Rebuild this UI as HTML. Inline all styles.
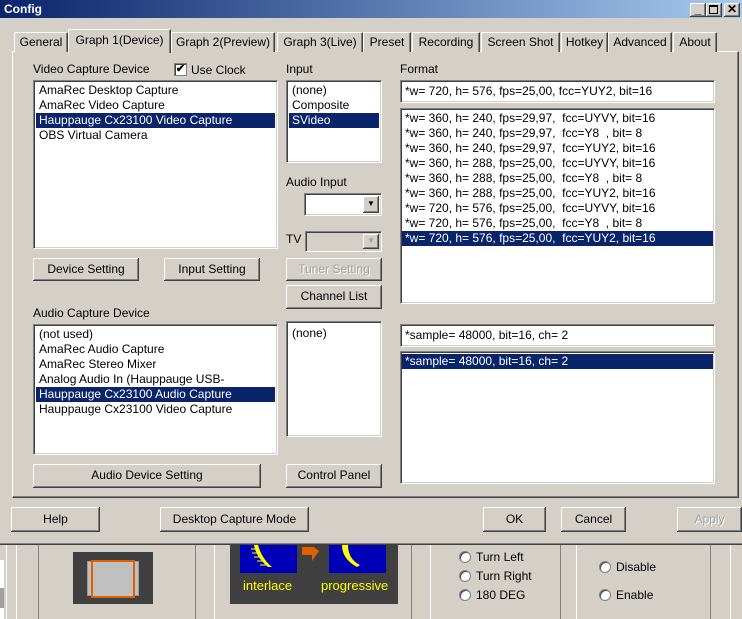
<!DOCTYPE html>
<html><head><meta charset="utf-8"><style>
*{margin:0;padding:0;box-sizing:border-box}
body{width:742px;height:619px;overflow:hidden;background:#d4d0c8;font-family:"Liberation Sans",sans-serif;font-size:12px;color:#000;position:relative}
.a{position:absolute}
.btn{position:absolute;background:#d4d0c8;box-shadow:inset -1px -1px #404040,inset 1px 1px #fff,inset -2px -2px #808080;text-align:center;line-height:23px}
.dis{color:#a0a0a0;text-shadow:1px 1px #fff}
.sunk{position:absolute;background:#fff;border:1px solid;border-color:#808080 #fff #fff #808080;box-shadow:inset 1px 1px #404040,inset -1px -1px #d4d0c8}
.it{height:15px;line-height:15px;padding-left:3px;white-space:pre}
.sel{background:#0a246a;color:#fff}
.tab{position:absolute;top:32px;height:20px;background:#d4d0c8;border-top:1px solid #fff;border-left:1px solid #fff;border-right:1px solid #404040;box-shadow:inset -1px 0 #808080;text-align:center;line-height:18px;font-size:12px}
.radio{position:absolute;width:12px;height:12px;border-radius:50%;background:#fff;border:1px solid #808080;box-shadow:inset 1px 1px #404040}
</style></head><body>
<div class="a" style="left:0;top:0;width:742px;height:18px;background:linear-gradient(90deg,#0a246a,#a6caf0)"></div>
<div class="a" style="left:4px;top:2px;color:#fff;font-weight:bold;font-size:12px">Config</div>
<div class="btn" style="left:690px;top:3px;width:16px;height:14px;line-height:12px;font-weight:bold">_</div>
<div class="btn" style="left:706px;top:3px;width:16px;height:14px"><div class="a" style="left:3px;top:2px;width:9px;height:9px;border:1px solid #000;border-top-width:2px"></div></div>
<div class="btn" style="left:724px;top:3px;width:16px;height:14px;line-height:13px;font-weight:bold">✕</div>

<div class="a" style="left:12px;top:51px;width:727px;height:447px;border-top:1px solid #fff;border-left:1px solid #fff;border-right:1px solid #404040;border-bottom:1px solid #404040;box-shadow:inset -1px -1px #808080"></div>
<div class="tab" style="left:14px;width:54px">General</div>
<div class="tab" style="left:171px;width:104px">Graph 2(Preview)</div>
<div class="tab" style="left:277px;width:86px">Graph 3(Live)</div>
<div class="tab" style="left:363px;width:48px">Preset</div>
<div class="tab" style="left:412px;width:68px">Recording</div>
<div class="tab" style="left:481px;width:79px">Screen Shot</div>
<div class="tab" style="left:561px;width:47px">Hotkey</div>
<div class="tab" style="left:608px;width:64px">Advanced</div>
<div class="tab" style="left:673px;width:44px">About</div>
<div class="tab" style="left:68px;top:29px;height:24px;width:103px;border-bottom:none;line-height:20px">Graph 1(Device)</div>

<div class="a" style="left:33px;top:62px">Video Capture Device</div>
<div class="a" style="left:174px;top:63px;width:13px;height:13px;background:#fff;border:1px solid #808080;box-shadow:inset 1px 1px #404040;font-size:11px;line-height:11px;text-align:center;font-weight:bold">✔</div>
<div class="a" style="left:191px;top:63px">Use Clock</div>
<div class="sunk" style="left:33px;top:80px;width:245px;height:169px;padding:2px"><div class="it">AmaRec Desktop Capture</div><div class="it">AmaRec Video Capture</div><div class="it sel">Hauppauge Cx23100 Video Capture</div><div class="it">OBS Virtual Camera</div></div>

<div class="a" style="left:286px;top:62px">Input</div>
<div class="sunk" style="left:286px;top:80px;width:96px;height:83px;padding:2px"><div class="it">(none)</div><div class="it">Composite</div><div class="it sel">SVideo</div></div>

<div class="a" style="left:286px;top:175px">Audio Input</div>
<div class="sunk" style="left:304px;top:193px;width:78px;height:23px"><div class="btn" style="right:2px;top:2px;width:16px;height:17px;line-height:15px;font-size:8px">▼</div></div>
<div class="a" style="left:286px;top:232px">TV</div>
<div class="sunk" style="left:305px;top:231px;width:77px;height:21px;background:#d4d0c8"><div class="btn" style="right:2px;top:2px;width:16px;height:15px;line-height:14px;font-size:8px;color:#a0a0a0">▼</div></div>
<div class="btn dis" style="left:286px;top:258px;width:96px;height:23px">Tuner Setting</div>
<div class="btn" style="left:286px;top:285px;width:96px;height:24px">Channel List</div>

<div class="btn" style="left:33px;top:258px;width:106px;height:23px">Device Setting</div>
<div class="btn" style="left:164px;top:258px;width:96px;height:23px">Input Setting</div>

<div class="a" style="left:33px;top:306px">Audio Capture Device</div>
<div class="sunk" style="left:33px;top:324px;width:245px;height:131px;padding:2px"><div class="it">(not used)</div><div class="it">AmaRec Audio Capture</div><div class="it">AmaRec Stereo Mixer</div><div class="it">Analog Audio In (Hauppauge USB-</div><div class="it sel">Hauppauge Cx23100 Audio Capture</div><div class="it">Hauppauge Cx23100 Video Capture</div></div>
<div class="sunk" style="left:286px;top:321px;width:96px;height:116px;padding:4px 2px"><div class="it">(none)</div></div>
<div class="btn" style="left:33px;top:464px;width:228px;height:24px">Audio Device Setting</div>
<div class="btn" style="left:286px;top:464px;width:96px;height:24px">Control Panel</div>

<div class="a" style="left:400px;top:62px">Format</div>
<div class="sunk" style="left:400px;top:80px;width:315px;height:23px;padding:3px 4px">*w= 720, h= 576, fps=25,00,  fcc=YUY2, bit=16</div>
<div class="sunk" style="left:400px;top:108px;width:315px;height:196px;padding:2px 1px">
<div class="it">*w= 360, h= 240, fps=29,97,  fcc=UYVY, bit=16</div>
<div class="it">*w= 360, h= 240, fps=29,97,  fcc=Y8  , bit= 8</div>
<div class="it">*w= 360, h= 240, fps=29,97,  fcc=YUY2, bit=16</div>
<div class="it">*w= 360, h= 288, fps=25,00,  fcc=UYVY, bit=16</div>
<div class="it">*w= 360, h= 288, fps=25,00,  fcc=Y8  , bit= 8</div>
<div class="it">*w= 360, h= 288, fps=25,00,  fcc=YUY2, bit=16</div>
<div class="it">*w= 720, h= 576, fps=25,00,  fcc=UYVY, bit=16</div>
<div class="it">*w= 720, h= 576, fps=25,00,  fcc=Y8  , bit= 8</div>
<div class="it sel">*w= 720, h= 576, fps=25,00,  fcc=YUY2, bit=16</div>
</div>
<div class="sunk" style="left:400px;top:324px;width:315px;height:23px;padding:3px 4px">*sample= 48000, bit=16, ch= 2</div>
<div class="sunk" style="left:400px;top:351px;width:315px;height:133px;padding:2px 1px"><div class="it sel">*sample= 48000, bit=16, ch= 2</div></div>

<div class="btn" style="left:11px;top:507px;width:89px;height:25px;line-height:24px">Help</div>
<div class="btn" style="left:160px;top:507px;width:149px;height:25px;line-height:24px">Desktop Capture Mode</div>
<div class="btn" style="left:483px;top:507px;width:63px;height:25px;line-height:24px">OK</div>
<div class="btn" style="left:561px;top:507px;width:65px;height:25px;line-height:24px">Cancel</div>
<div class="btn dis" style="left:677px;top:507px;width:65px;height:25px;line-height:24px">Apply</div>

<div class="a" style="left:0;top:543px;width:742px;height:1px;background:#808080"></div>
<div class="a" style="left:0;top:544px;width:742px;height:1px;background:#404040"></div>
<div class="a" style="left:0;top:560px;width:4px;height:59px;background:#fff"></div>
<div class="a" style="left:0;top:588px;width:4px;height:20px;background:#a0a0a0"></div>
<div class="a" style="left:6px;top:545px;width:1px;height:74px;background:#fff"></div>
<div class="a" style="left:16px;top:545px;width:1px;height:74px;background:#fff"></div>
<div class="a" style="left:38px;top:545px;width:1px;height:74px;background:#808080"></div>
<div class="a" style="left:195px;top:545px;width:1px;height:74px;background:#808080"></div>
<div class="a" style="left:214px;top:545px;width:1px;height:74px;background:#fff"></div>
<div class="a" style="left:411px;top:545px;width:1px;height:74px;background:#808080"></div>
<div class="a" style="left:430px;top:545px;width:1px;height:74px;background:#fff"></div>
<div class="a" style="left:560px;top:545px;width:1px;height:74px;background:#808080"></div>
<div class="a" style="left:576px;top:545px;width:1px;height:74px;background:#fff"></div>
<div class="a" style="left:710px;top:545px;width:1px;height:74px;background:#808080"></div>
<div class="a" style="left:730px;top:545px;width:1px;height:74px;background:#fff"></div>
<div class="a" style="left:73px;top:552px;width:80px;height:52px;background:#404040"></div>
<div class="a" style="left:87px;top:561px;width:52px;height:35px;background:#c0c0c0;border:1px solid #999"></div>
<div class="a" style="left:91px;top:560px;width:44px;height:38px;background:#c0c0c0;border:2px solid #e06000"></div>
<div class="a" style="left:230px;top:545px;width:168px;height:59px;background:#404040"></div>
<div class="a" style="left:240px;top:545px;width:57px;height:28px;background:#0000b8"></div>
<div class="a" style="left:329px;top:545px;width:57px;height:28px;background:#0000b8"></div>
<svg class="a" style="left:240px;top:545px" width="150" height="28"><path d="M18 0 Q22 14 32 22 L28 22 Q16 12 14 0Z" fill="#ff0"/><path d="M19 4h-8M20 8h-8M22 12h-8M25 16h-8M28 20h-8" stroke="#ff0" stroke-width="1"/><path d="M108 0 Q108 14 120 20 L117 22 Q102 14 102 0Z" fill="#ff0"/><path d="M62 2h12l5 4-7 10v-6h-10z" fill="#e06000"/></svg>
<div class="a" style="left:243px;top:578px;color:#ff0;font-size:13px">interlace</div>
<div class="a" style="left:321px;top:578px;color:#ff0;font-size:13px">progressive</div>
<div class="radio" style="left:459px;top:551px"></div><div class="a" style="left:476px;top:550px">Turn Left</div>
<div class="radio" style="left:459px;top:570px"></div><div class="a" style="left:476px;top:569px">Turn Right</div>
<div class="radio" style="left:459px;top:589px"></div><div class="a" style="left:476px;top:588px">180 DEG</div>
<div class="radio" style="left:599px;top:561px"></div><div class="a" style="left:616px;top:560px">Disable</div>
<div class="radio" style="left:599px;top:589px"></div><div class="a" style="left:616px;top:588px">Enable</div>
</body></html>
